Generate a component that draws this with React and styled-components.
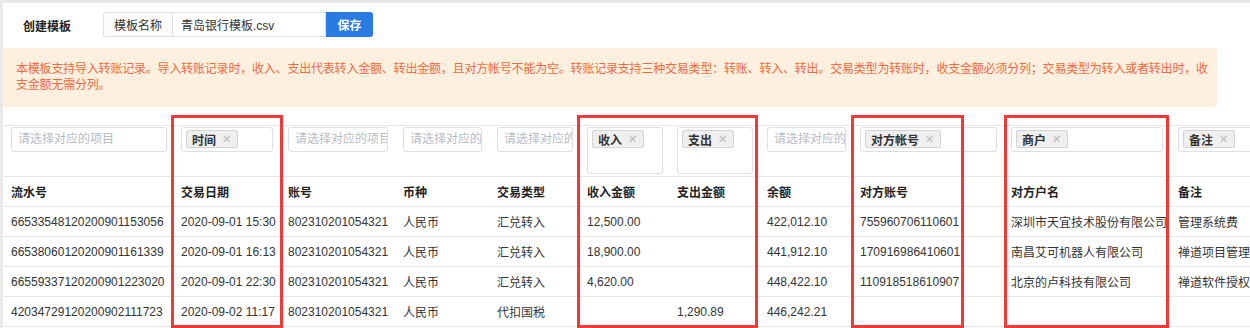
import React from "react";
import styled, { createGlobalStyle } from "styled-components";

const GlobalStyle = createGlobalStyle`
  body {
    margin: 0;
    background: #e9e9e9;
    overflow: hidden;
    font-family: "Liberation Sans", "Noto Sans CJK SC", sans-serif;
    color: #333;
  }
`;

const Panel = styled.div`
  margin: 3px 0 0 3px;
  background: #ffffff;
  width: 1400px;
  height: 330px;
`;

const TopBar = styled.div`
  display: flex;
  align-items: center;
  height: 45px;
  padding-left: 20px;
`;

const PageTitle = styled.div`
  width: 80px;
  font-size: 12px;
  font-weight: bold;
  color: #222;
`;

const InputGroup = styled.div`
  display: flex;
  height: 25px;
  margin-top: -3px;
`;

const Addon = styled.div`
  width: 68px;
  display: flex;
  align-items: center;
  justify-content: center;
  border: 1px solid #dcdfe6;
  border-right: none;
  border-radius: 3px 0 0 3px;
  background: #fcfcfc;
  font-size: 12px;
  color: #333;
`;

const NameInput = styled.div`
  width: 144px;
  display: flex;
  align-items: center;
  padding-left: 8px;
  border: 1px solid #dcdfe6;
  font-size: 12px;
  color: #333;
`;

const SaveButton = styled.button`
  width: 47px;
  border: none;
  border-radius: 0 3px 3px 0;
  background: #2a7ae4;
  color: #fff;
  font-family: inherit;
  font-size: 12px;
  font-weight: bold;
  padding: 0;
`;

const Notice = styled.div`
  width: 1189px;
  padding: 13px 12px 14px 13px;
  background: #fdf0de;
  border-radius: 0 4px 4px 0;
  color: #f26a3f;
  font-size: 12px;
  line-height: 16px;
  letter-spacing: -0.2px;
  white-space: nowrap;
`;

const TableWrap = styled.div`
  position: relative;
  margin-top: 18px;
  border-top: 1px solid #e6e8eb;
`;

const Row = styled.div`
  display: grid;
  grid-template-columns: ${(p) => p.$cols};
  height: ${(p) => p.$height}px;
  border-bottom: 1px solid #e6e8eb;
`;

const Cell = styled.div`
  display: flex;
  align-items: ${(p) => (p.$top ? "flex-start" : "center")};
  padding-left: ${(p) => (p.$first ? 8 : 7)}px;
  padding-top: ${(p) => (p.$top ? 1 : 0)}px;
  font-size: 12px;
  font-weight: ${(p) => (p.$head ? "bold" : "normal")};
  color: ${(p) => (p.$head ? "#222" : "#333")};
  white-space: nowrap;
  overflow: hidden;
`;

const SelectBox = styled.div`
  box-sizing: border-box;
  width: ${(p) => p.$w}px;
  height: ${(p) => (p.$tall ? 47 : 25)}px;
  flex-shrink: 0;
  border: 1px solid #dcdfe6;
  border-radius: 3px;
  padding: 2px 4px;
  display: flex;
  align-items: flex-start;
  overflow: hidden;
`;

const Placeholder = styled.span`
  font-size: 12px;
  line-height: 19px;
  padding-left: 2px;
  color: #b8bcc4;
  white-space: nowrap;
`;

const Tag = styled.span`
  display: inline-flex;
  align-items: center;
  height: 16px;
  padding: 0 6px 0 5px;
  border: 1px solid #d3d3d3;
  border-radius: 2px;
  background: #efefef;
  font-size: 12px;
  font-weight: bold;
  color: #333;
`;

const TagClose = styled.span`
  margin-left: 6px;
  font-size: 11px;
  font-weight: normal;
  color: #b9b9b9;
`;

const Mark = styled.div`
  position: absolute;
  top: -11px;
  height: 207px;
  border: 3px solid #f03a3a;
  pointer-events: none;
`;

const columns = [
  { title: "流水号", width: 171, select: 156 },
  { title: "交易日期", width: 107, select: 92, tag: "时间" },
  { title: "账号", width: 115, select: 100 },
  { title: "币种", width: 94, select: 79 },
  { title: "交易类型", width: 90, select: 76 },
  { title: "收入金额", width: 90, select: 76, tag: "收入", tall: true },
  { title: "支出金额", width: 90, select: 76, tag: "支出", tall: true },
  { title: "余额", width: 93, select: 79 },
  { title: "对方账号", width: 151, select: 137, tag: "对方帐号" },
  { title: "对方户名", width: 167, select: 152, tag: "商户" },
  { title: "备注", width: 200, select: 150, tag: "备注" },
];

const rows = [
  ["66533548120200901153056", "2020-09-01 15:30", "802310201054321", "人民币", "汇兑转入", "12,500.00", "", "422,012.10", "755960706110601", "深圳市天宜技术股份有限公司", "管理系统费"],
  ["66538060120200901161339", "2020-09-01 16:13", "802310201054321", "人民币", "汇兑转入", "18,900.00", "", "441,912.10", "170916986410601", "南昌艾可机器人有限公司", "禅道项目管理软件"],
  ["66559337120200901223020", "2020-09-01 22:30", "802310201054321", "人民币", "汇兑转入", "4,620.00", "", "448,422.10", "110918518610907", "北京的卢科技有限公司", "禅道软件授权费"],
  ["42034729120200902111723", "2020-09-02 11:17", "802310201054321", "人民币", "代扣国税", "", "1,290.89", "446,242.21", "", "", ""],
];

const marks = [
  { left: 168, width: 106 },
  { left: 574, width: 175 },
  { left: 848, width: 107 },
  { left: 1001, width: 159 },
];

const gridCols = columns.map((c) => `${c.width}px`).join(" ");

export default function App() {
  return (
    <>
      <GlobalStyle />
      <Panel>
        <TopBar>
          <PageTitle>创建模板</PageTitle>
          <InputGroup>
            <Addon>模板名称</Addon>
            <NameInput>青岛银行模板.csv</NameInput>
            <SaveButton>保存</SaveButton>
          </InputGroup>
        </TopBar>
        <Notice>
          本模板支持导入转账记录。导入转账记录时，收入、支出代表转入金额、转出金额，且对方帐号不能为空。转账记录支持三种交易类型：转账、转入、转出。交易类型为转账时，收支金额必须分列；交易类型为转入或者转出时，收
          <br />
          支金额无需分列。
        </Notice>
        <TableWrap>
          <Row $cols={gridCols} $height={50}>
            {columns.map((c, i) => (
              <Cell key={c.title} $first={i === 0} $top>
                <SelectBox $w={c.select} $tall={c.tall}>
                  {c.tag ? (
                    <Tag>
                      {c.tag}
                      <TagClose>✕</TagClose>
                    </Tag>
                  ) : (
                    <Placeholder>请选择对应的项目</Placeholder>
                  )}
                </SelectBox>
              </Cell>
            ))}
          </Row>
          <Row $cols={gridCols} $height={29}>
            {columns.map((c, i) => (
              <Cell key={c.title} $first={i === 0} $head>
                {c.title}
              </Cell>
            ))}
          </Row>
          {rows.map((r) => (
            <Row key={r[0]} $cols={gridCols} $height={29}>
              {r.map((v, i) => (
                <Cell key={i} $first={i === 0}>
                  {v}
                </Cell>
              ))}
            </Row>
          ))}
          {marks.map((m) => (
            <Mark key={m.left} style={{ left: m.left, width: m.width }} />
          ))}
        </TableWrap>
      </Panel>
    </>
  );
}
